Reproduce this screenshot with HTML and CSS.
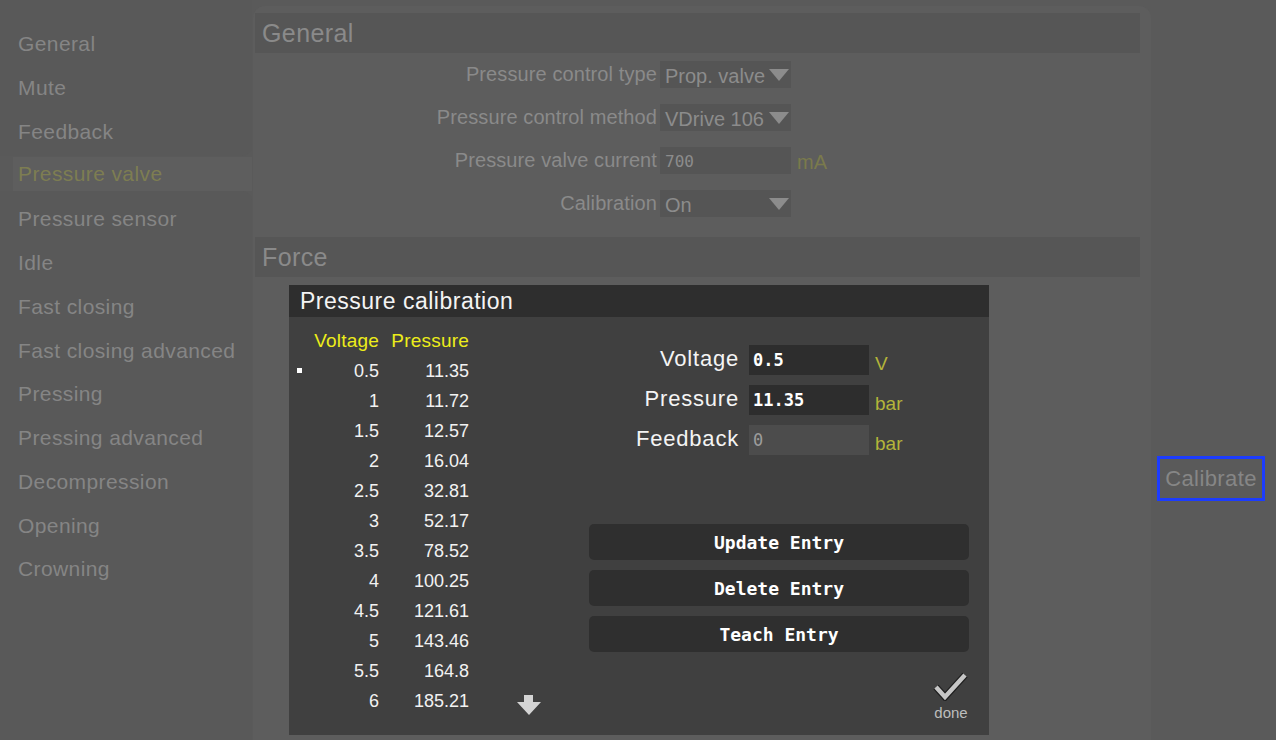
FILE: index.html
```html
<!DOCTYPE html>
<html lang="en">
<head>
<meta charset="utf-8">
<title>Pressure valve settings</title>
<link rel="stylesheet" href="styles.css">
</head>
<body>
<div class="app">
  <nav class="sidebar">
    <div class="nav-group nav-group-top">
      <div class="nav-item">General</div>
      <div class="nav-item">Mute</div>
      <div class="nav-item">Feedback</div>
    </div>
    <div class="nav-item nav-item-active">Pressure valve</div>
    <div class="nav-group nav-group-bottom">
      <div class="nav-item">Pressure sensor</div>
      <div class="nav-item">Idle</div>
      <div class="nav-item">Fast closing</div>
      <div class="nav-item">Fast closing advanced</div>
      <div class="nav-item">Pressing</div>
      <div class="nav-item">Pressing advanced</div>
      <div class="nav-item">Decompression</div>
      <div class="nav-item">Opening</div>
      <div class="nav-item">Crowning</div>
    </div>
  </nav>

  <main class="panel">
    <section class="section">
      <h2 class="section-header">General</h2>
      <div class="form">
        <span class="form-label">Pressure control type</span>
        <div class="field select"><span class="field-text">Prop. valve</span><svg class="caret" width="20" height="12" viewBox="0 0 20 12"><polygon points="0,0 20,0 10,12"/></svg></div>
        <span class="form-unit"></span>

        <span class="form-label">Pressure control method</span>
        <div class="field select"><span class="field-text">VDrive 106</span><svg class="caret" width="20" height="12" viewBox="0 0 20 12"><polygon points="0,0 20,0 10,12"/></svg></div>
        <span class="form-unit"></span>

        <span class="form-label">Pressure valve current</span>
        <div class="field"><span class="field-mono">700</span></div>
        <span class="form-unit">mA</span>

        <span class="form-label">Calibration</span>
        <div class="field select"><span class="field-text">On</span><svg class="caret" width="20" height="12" viewBox="0 0 20 12"><polygon points="0,0 20,0 10,12"/></svg></div>
        <span class="form-unit"></span>
      </div>
    </section>
    <section class="section section-force">
      <h2 class="section-header">Force</h2>
    </section>
  </main>

  <aside class="actions">
    <button class="calibrate">Calibrate</button>
  </aside>
</div>

<div class="modal">
  <div class="modal-title">Pressure calibration</div>
  <div class="modal-body">
    <div class="list">
      <div class="table">
        <span></span><span class="th">Voltage</span><span class="th">Pressure</span>
        <span class="marker"></span><span class="td">0.5</span><span class="td">11.35</span>
        <span></span><span class="td">1</span><span class="td">11.72</span>
        <span></span><span class="td">1.5</span><span class="td">12.57</span>
        <span></span><span class="td">2</span><span class="td">16.04</span>
        <span></span><span class="td">2.5</span><span class="td">32.81</span>
        <span></span><span class="td">3</span><span class="td">52.17</span>
        <span></span><span class="td">3.5</span><span class="td">78.52</span>
        <span></span><span class="td">4</span><span class="td">100.25</span>
        <span></span><span class="td">4.5</span><span class="td">121.61</span>
        <span></span><span class="td">5</span><span class="td">143.46</span>
        <span></span><span class="td">5.5</span><span class="td">164.8</span>
        <span></span><span class="td">6</span><span class="td">185.21</span>
      </div>
      <svg class="scroll-down" width="24" height="21" viewBox="0 0 24 21"><path d="M7 0H16V7H24L12 20L0 7H7Z"/></svg>
    </div>
    <div class="editor">
      <div class="entry-form">
        <span class="entry-label">Voltage</span>
        <span class="entry-input">0.5</span>
        <span class="entry-unit">V</span>
        <span class="entry-label">Pressure</span>
        <span class="entry-input">11.35</span>
        <span class="entry-unit">bar</span>
        <span class="entry-label">Feedback</span>
        <span class="entry-input entry-input-readonly">0</span>
        <span class="entry-unit">bar</span>
      </div>
      <div class="buttons">
        <button class="btn">Update Entry</button>
        <button class="btn">Delete Entry</button>
        <button class="btn">Teach Entry</button>
      </div>
      <div class="done">
        <svg class="done-check" width="36" height="30" viewBox="0 0 36 30"><polyline points="3,16 12,26 32,4" class="check-outline"/><polyline points="3,16 12,26 32,4" class="check-fill"/></svg>
        <span class="done-text">done</span>
      </div>
    </div>
  </div>
</div>
</body>
</html>
```

FILE: styles.css
```css
* { box-sizing: border-box; }

html, body {
  margin: 0;
  padding: 0;
}

body {
  width: 1276px;
  height: 740px;
  overflow: hidden;
  background: #5a5a5a;
  font-family: "Liberation Sans", Arial, sans-serif;
  position: relative;
}

.app {
  display: flex;
  height: 740px;
}

/* Sidebar */
.sidebar {
  width: 252px;
  flex: none;
  display: flex;
  flex-direction: column;
}

.nav-group {
  background: #595959;
}

.nav-group-top {
  padding: 22px 0 3px;
  border-bottom-right-radius: 10px;
}

.nav-group-bottom {
  flex: 1;
  padding-top: 6px;
  border-top-right-radius: 10px;
}

.nav-item {
  height: 43.75px;
  line-height: 43.75px;
  width: 240px;
  padding-left: 18px;
  font-size: 21px;
  letter-spacing: 0.4px;
  color: #858585;
  white-space: nowrap;
  overflow: hidden;
}

.nav-item-active {
  margin: 1px 0 0 13px;
  width: 239px;
  height: 34px;
  line-height: 34px;
  padding-left: 5px;
  background: #5e5e5e;
  color: #7d7d52;
}

/* Main panel */
.panel {
  width: 898px;
  flex: none;
  margin: 6px 0 0 1px;
  padding: 7px 11px 0 2px;
  background: #5d5d5d;
  border-radius: 12px 12px 0 0;
}

.section-header {
  margin: 0;
  height: 40px;
  line-height: 40px;
  padding-left: 7px;
  background: #565656;
  font-size: 25px;
  letter-spacing: 0.4px;
  font-weight: normal;
  color: #8a8a8a;
}

.form {
  display: grid;
  grid-template-columns: 402px 131px auto;
  column-gap: 3px;
  row-gap: 16px;
  margin-top: 8px;
  align-items: center;
}

.form-label {
  text-align: right;
  font-size: 20px;
  letter-spacing: 0.1px;
  color: #8a8a8a;
  white-space: nowrap;
}

.field {
  height: 27px;
  background: #555555;
  display: flex;
  align-items: center;
  padding-left: 5px;
  color: #8c8c8c;
}

.select {
  justify-content: space-between;
  padding-right: 2px;
}

.field-text {
  font-size: 20px;
  margin-top: 3px;
  white-space: nowrap;
}

.field-mono {
  font-family: "DejaVu Sans Mono", "Liberation Mono", monospace;
  font-size: 16px;
  margin-top: 1px;
}

.caret {
  fill: #8c8c8c;
  flex: none;
}

.form-unit {
  margin-left: 3px;
  font-size: 20px;
  color: #7a7a4c;
  margin-top: 4px;
}

.section-force {
  margin-top: 20px;
}

/* Right actions */
.actions {
  flex: 1;
  padding: 456px 0 0 6px;
}

.calibrate {
  width: 108px;
  height: 45px;
  border: 3px solid #1c3cfe;
  background: transparent;
  font-family: "Liberation Sans", Arial, sans-serif;
  font-size: 22px;
  letter-spacing: 0.4px;
  color: #868686;
  padding: 0;
}

/* Modal */
.modal {
  position: absolute;
  left: 289px;
  top: 285px;
  width: 700px;
  height: 450px;
  background: #404040;
  display: flex;
  flex-direction: column;
}

.modal-title {
  height: 34px;
  line-height: 32px;
  padding-left: 11px;
  background: #2e2e2e;
  color: #f4f4f4;
  font-size: 23px;
  letter-spacing: 0.5px;
}

.modal-body {
  flex: 1;
  display: flex;
  padding: 0 20px 0 8px;
}

.list {
  display: flex;
  align-items: flex-end;
  width: 292px;
  flex: none;
  padding-bottom: 20px;
}

.table {
  display: grid;
  grid-template-columns: 5px 77px 90px;
  grid-auto-rows: 30px;
  align-items: center;
  padding-top: 9px;
  align-self: flex-start;
}

.th {
  text-align: right;
  font-size: 19px;
  letter-spacing: 0.2px;
  color: #eded1a;
}

.td {
  text-align: right;
  font-size: 18px;
  color: #f2f2f2;
}

.marker {
  width: 5px;
  height: 5px;
  background: #ffffff;
  margin-top: -2px;
}

.scroll-down {
  fill: #d4d4d4;
  margin-left: 48px;
  flex: none;
}

.editor {
  flex: 1;
  display: flex;
  flex-direction: column;
  padding-top: 28px;
}

.entry-form {
  display: grid;
  grid-template-columns: 150px 120px auto;
  grid-auto-rows: 30px;
  column-gap: 10px;
  row-gap: 10px;
  align-items: center;
}

.entry-form .entry-unit {
  margin-left: -4px;
}

.entry-label {
  text-align: right;
  font-size: 22px;
  letter-spacing: 0.8px;
  color: #f4f4f4;
  margin-top: -2px;
  white-space: nowrap;
}

.entry-input {
  height: 30px;
  line-height: 30px;
  background: #2d2d2d;
  padding-left: 4px;
  font-family: "DejaVu Sans Mono", "Liberation Mono", monospace;
  font-weight: bold;
  font-size: 17px;
  color: #ffffff;
}

.entry-input-readonly {
  background: #4c4c4c;
  color: #9c9c9c;
  font-weight: normal;
}

.entry-unit {
  font-size: 19px;
  color: #b4b43a;
  margin-top: 8px;
}

.buttons {
  display: flex;
  flex-direction: column;
  gap: 10px;
  margin-top: 69px;
}

.btn {
  height: 36px;
  border: none;
  border-radius: 5px;
  background: #2f2f2f;
  color: #ffffff;
  font-family: "DejaVu Sans Mono", "Liberation Mono", monospace;
  font-weight: bold;
  font-size: 18px;
  padding: 0;
}

.done {
  align-self: flex-end;
  display: flex;
  flex-direction: column;
  align-items: center;
  margin-top: 19px;
  width: 36px;
}

.check-outline {
  fill: none;
  stroke: #1e1e1e;
  stroke-width: 7;
  stroke-linejoin: miter;
}

.check-fill {
  fill: none;
  stroke: #c6c6c6;
  stroke-width: 4.5;
  stroke-linejoin: miter;
}

.done-text {
  font-size: 15px;
  color: #bdbdbd;
  margin-top: 4px;
  line-height: 16px;
}
```
